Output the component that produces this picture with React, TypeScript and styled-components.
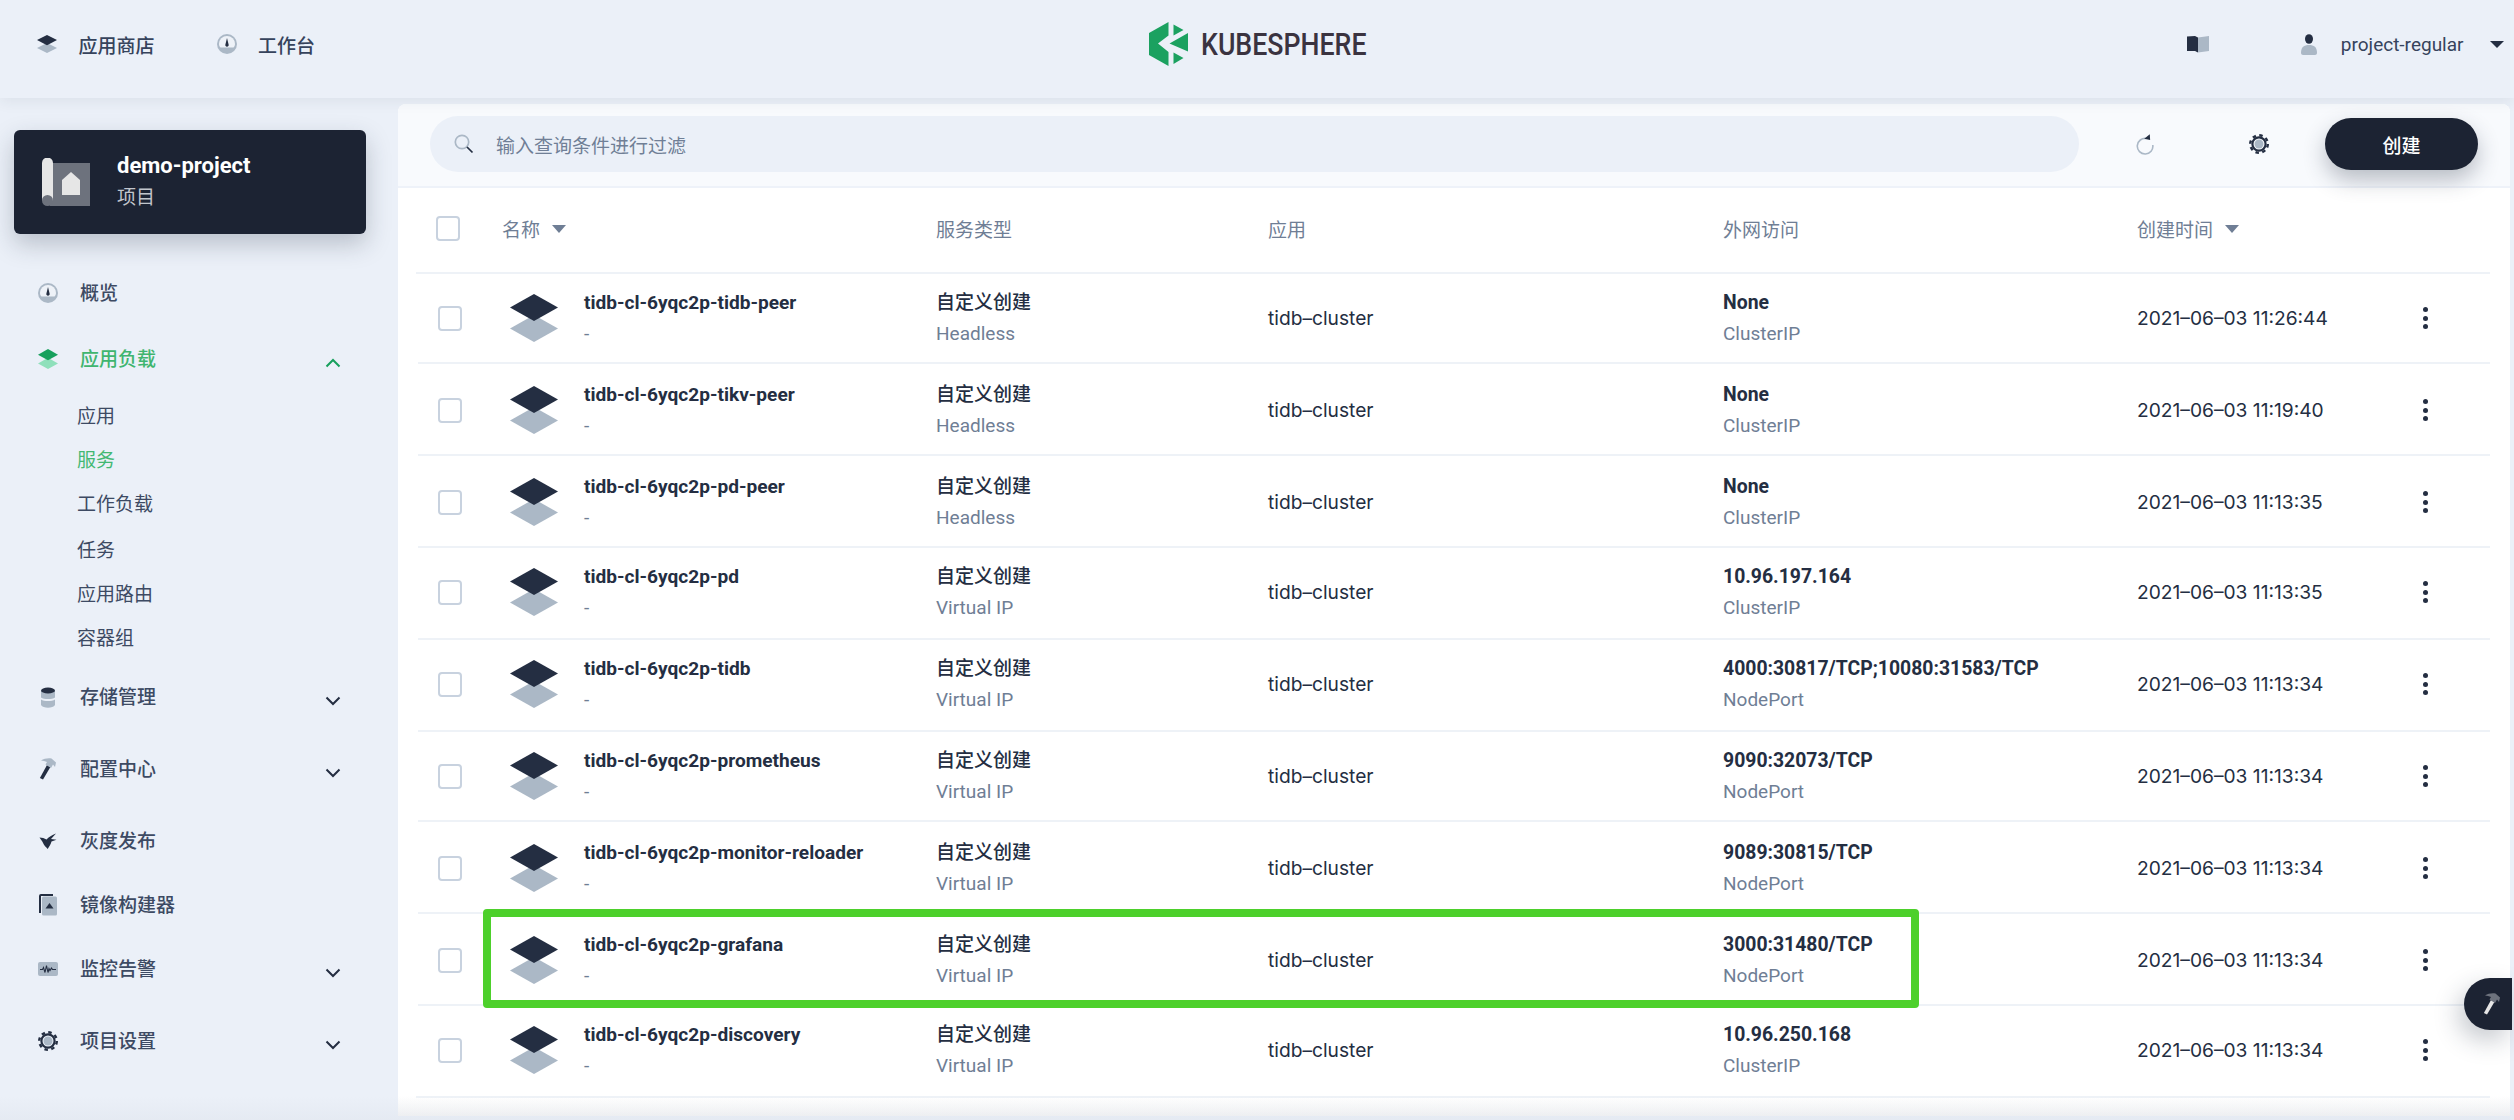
import React from "react";
import styled, { createGlobalStyle } from "styled-components";

const CJK = '"Noto Sans CJK SC"';
const Global = createGlobalStyle`
  html, body { margin: 0; padding: 0; background: #ebf0f8; }
  body { font-family: Roboto, ${CJK}, sans-serif; color: #242e42; }
  * { box-sizing: border-box; }
`;

const Page = styled.div`
  width: 2514px; height: 1120px; overflow: hidden; position: relative;
  display: flex; flex-direction: column; background: #ebf0f8;
  &::after {
    content: ""; position: absolute; left: 0; right: 0; bottom: 0; height: 24px;
    background: linear-gradient(to bottom, rgba(60,70,90,0), rgba(60,70,90,.035));
    pointer-events: none;
  }
`;
const Header = styled.header`
  flex: none; height: 98px; display: grid; grid-template-columns: 1fr auto 1fr; align-items: center;
  background: #ebf0f8; position: relative; z-index: 2; box-shadow: 0 3px 14px rgba(36,46,66,.08);
  padding: 0 10px 10px 10px;
`;
const HeadLeft = styled.div`display: flex; align-items: center; gap: 62px; margin-left: 27px;`;
const HeadLink = styled.div`display: flex; align-items: center; gap: 21.500px; font-size: 19px; font-weight: 500; color: #36435c;`;
const Logo = styled.div`display: flex; align-items: center; gap: 12px; height: 46px;`;
const LogoText = styled.span`
  display: block; width: 164px; font-size: 32px; line-height: 46px; font-weight: 500; color: #3a3340;
  transform: scaleX(.835); transform-origin: left center; white-space: nowrap;
`;
const HeadRight = styled.div`display: flex; align-items: center; justify-content: flex-end;`;
const UserName = styled.span`font-size: 19px; color: #36435c; margin: 0 26.500px 0 23.500px;`;
const UserIconWrap = styled.span`display: flex; margin-left: 92px;`;
const Body = styled.div`flex: 1; display: flex; min-height: 0;`;
const Sidebar = styled.aside`flex: none; width: 398px; padding: 32px 0 0 14px;`;
const ProjectCard = styled.div`
  width: 352px; height: 104px; border-radius: 6px; background: #1c2333;
  box-shadow: 0 10px 24px rgba(36,46,66,.25); display: flex; align-items: center; gap: 27px; padding-left: 28px;
`;
const ProjectTitle = styled.div`font-size: 22px; line-height: 31px; font-weight: 700; color: #fff;`;
const ProjectSub = styled.div`font-size: 19px; line-height: 33px; color: #c1c5cc;`;
const Nav = styled.nav`margin-top: 37px; width: 352px;`;
const NavRow = styled.div<{ $gap: number }>`
  height: 44px; margin-top: ${p => p.$gap}px; display: flex; align-items: center; position: relative; padding-left: 24px;
`;
const NavIcon = styled.span`flex: none; width: 20px; height: 24px; display: flex; align-items: center; justify-content: center;`;
const NavLabel = styled.span<{ $active?: boolean }>`
  margin-left: 22px; padding-bottom: 3px; font-size: 19px; font-weight: 500; color: ${p => (p.$active ? "#3fb56f" : "#3d4a63")}; flex: 1;
`;
const Chevron = styled.svg`flex: none; width: 16px; height: 10px; margin: 8px 25.500px 0 0;`;
const SubItem = styled.div<{ $active?: boolean; $gap: number }>`
  height: 44px; line-height: 44px; margin-top: ${p => p.$gap}px; padding: 2px 0 0 63px; font-size: 19px;
  color: ${p => (p.$active ? "#43b873" : "#3d4a63")};
`;
const Main = styled.main`flex: 1; padding: 6px 4px 4px 0; min-width: 0;`;
const Panel = styled.section`
  height: 100%; background: linear-gradient(to bottom, #fff 0, #fff 992px, #f3f4f6 100%); border-radius: 8px 8px 0 0;
`;
const Toolbar = styled.div`
  height: 84px; display: flex; align-items: center; background: #f8fafd; border-bottom: 2px solid #eef2f9;
  padding: 0 32px 2px; border-radius: 8px 8px 0 0;
`;
const Search = styled.div`
  flex: none; width: 1649px; height: 56px; border-radius: 28px; background: #ebf0f8;
  display: flex; align-items: center; padding-left: 24px; gap: 22px; font-size: 19px; color: #707f96;
`;
const RefreshBtn = styled.span`display: flex; margin-left: 57px;`;
const GearBtn = styled.span`display: flex; margin-left: 95px;`;
const CreateBtn = styled.button`
  margin-left: 56px; width: 154px; height: 52px; border: 0; border-radius: 26px; background: #1c2333; color: #fff;
  font: 500 19px Roboto, ${CJK}, sans-serif; box-shadow: 0 10px 22px rgba(36,46,66,.3);
`;
const Table = styled.div`margin: 0 20px 0 18px;`;
const Head = styled.div`
  height: 86px; display: grid; align-items: center; border-bottom: 2px solid #eef2f7;
  grid-template-columns: 66px 434px 332px 455px 414px 1fr; padding: 0 0 3px 20px;
  font-size: 19px; color: #6f7e95;
`;
const HeadCell = styled.div`display: flex; align-items: center; gap: 12px;`;
const Box = styled.span`
  display: block; width: 24px; height: 25px; border: 2.500px solid #c8d2df; border-radius: 4px; background: #fff;
`;
const Row = styled.div<{ $h: number; $nudge: number; $last?: boolean }>`
  height: ${p => p.$h}px; display: grid; align-items: center; border-bottom: 2px solid #eef2f7;
  grid-template-columns: 72px 74px 352px 332px 455px 414px 270px 36px;
  margin-left: ${p => (p.$last ? 0 : 2)}px; padding-left: ${p => (p.$last ? 22 : 20)}px;
  padding-top: ${p => (p.$nudge > 0 ? 2 : 0)}px; padding-bottom: ${p => (p.$nudge < 0 ? 2 : 0)}px;
`;
const Stack = styled.div`line-height: 31px; white-space: nowrap;`;
const Name = styled.div`font-size: 19.100px; font-weight: 700; color: #242e42;`;
const Strong = styled.div`font-size: 19.400px; font-weight: 700; color: #242e42;`;
const TypeName = styled.div`font-size: 19px; font-weight: 500; color: #242e42;`;
const Sub = styled.div`font-size: 19px; color: #6f7e95;`;
const Plain = styled.div`font-family: Inter, ${CJK}, sans-serif; font-size: 19.200px; color: #242e42; white-space: nowrap;`;
const Kebab = styled.div`display: flex; flex-direction: column; align-items: center; gap: 3.500px;`;
const Dot = styled.i`display: block; width: 5px; height: 5px; border-radius: 50%; background: #242e42;`;
const Highlight = styled.div`
  position: absolute; left: 483px; top: 909px; width: 1436px; height: 99px; border: 8px solid #4dd02b; border-radius: 4px; pointer-events: none;
`;
const FloatBtn = styled.div`
  position: absolute; left: 2464px; top: 978px; width: 48px; height: 52px; border-radius: 26px 0 0 26px; background: #1c2333;
  box-shadow: -6px 10px 24px rgba(36,46,66,.25); display: flex; align-items: center; justify-content: center; padding-left: 8px;
`;
const HammerSvg = styled.svg`display: block;`;

const DARK = "#242e42";
const GREY = "#abb8c6";

const Layers = ({ a = DARK, b = GREY, w = 20, h = 20 }: { a?: string; b?: string; w?: number; h?: number }) => (
  <svg width={w} height={h} viewBox="0 0 48 48" preserveAspectRatio="none">
    <path d="M0 34.500L24 21 48 34.500 24 48z" fill={b} />
    <path d="M0 13.500L24 0 48 13.500 24 27z" fill={a} />
  </svg>
);
const Gauge = () => (
  <svg width="20" height="20" viewBox="0 0 20 20">
    <circle cx="10" cy="10" r="10" fill={GREY} />
    <path d="M2 10a8 8 0 0 1 16 0c0 2-1 3-1.500 3.500h-13C2.900 13 2 12 2 10z" fill="#eef2f8" />
    <path d="M10 4l1.600 6.500a1.700 1.700 0 1 1-3.200 0z" fill={DARK} />
  </svg>
);
const Storage = () => (
  <svg width="16" height="21" viewBox="0 0 16 21">
    <path d="M1 4h14v6.500c-3 2-11 2-14 0z" fill={GREY} />
    <path d="M1 12.500c3 2 11 2 14 0V18c-2 3.500-12 3.500-14 0z" fill={GREY} />
    <ellipse cx="8" cy="3.500" rx="7" ry="3" fill={DARK} />
  </svg>
);
const Hammer = ({ handle = DARK, head = GREY }: { handle?: string; head?: string }) => (
  <HammerSvg width="18" height="22" viewBox="0 0 18 22">
    <path d="M8 7l3.400 2L4 21.500.9 20z" fill={handle} />
    <path d="M2 2.500C5 .5 9 0 12.500.5L17 4.500 16 9l-2-2.500-2 3.500L6.500 6.500 8 4C6 3 4 3 2 2.500z" fill={head} />
  </HammerSvg>
);
const Bird = () => (
  <svg width="18" height="17" viewBox="0 0 18 17">
    <path d="M17 .5L12 6l5.500.8-5 1.700c-.6 3-2.500 5-3.800 7.500C7 14 5 12.500 3.800 9.500 3 8 2 6.500.5 4.500 3 4.700 5.500 5.300 7.500 6.500 9.500 4 13 2 17 .5z" fill={DARK} />
  </svg>
);
const Builder = () => (
  <svg width="18" height="22" viewBox="0 0 18 22">
    <path d="M14 1H2a1 1 0 0 0-1 1v17" fill="none" stroke={DARK} strokeWidth="2" />
    <rect x="3" y="2.500" width="15" height="19" rx="1.500" fill={GREY} />
    <path d="M10.500 9l4 5.500h-8z" fill={DARK} />
  </svg>
);
const Monitor = () => (
  <svg width="20" height="14" viewBox="0 0 20 14">
    <rect width="20" height="14" rx="2" fill={GREY} />
    <path d="M2 7.500h2.500l1-2 1.500 5 1.500-7 1.500 7 1-4 1 2 1.500-2.500 1 1.500H18" fill="none" stroke={DARK} strokeWidth="1.100" />
  </svg>
);
const Gear = ({ size = 20 }: { size?: number }) => (
  <svg width={size} height={size} viewBox="0 0 20 20">
    <circle cx="10" cy="10" r="8.800" fill="none" stroke={DARK} strokeWidth="2.400" strokeDasharray="3.500 3.410" />
    <circle cx="10" cy="10" r="6.600" fill="none" stroke={DARK} strokeWidth="2.200" />
    <circle cx="10" cy="10" r="4.500" fill={GREY} />
  </svg>
);
const Book = () => (
  <svg width="22" height="18" viewBox="0 0 22 18">
    <path d="M11 2.500L22 1v15l-11 1.500z" fill={GREY} />
    <path d="M0 1.500L8 1l3 1.500v15l-3-1.500H0z" fill={DARK} />
  </svg>
);
const User = () => (
  <svg width="16" height="21" viewBox="0 0 16 21">
    <path d="M0 19c0-6 3-8 8-8s8 2 8 8c0 1-1 2-2 2H2c-1 0-2-1-2-2z" fill={GREY} />
    <ellipse cx="8" cy="5" rx="4" ry="4.800" fill={DARK} />
  </svg>
);
const Caret = ({ w = 14, h = 7, c = DARK }: { w?: number; h?: number; c?: string }) => (
  <svg width={w} height={h} viewBox="0 0 14 7" preserveAspectRatio="none"><path d="M0 0h14L7 7z" fill={c} /></svg>
);
const Refresh = () => (
  <svg width="18" height="21" viewBox="0 0 18 21">
    <path d="M10.500 4.500A7.800 7.800 0 1 0 16.800 11" fill="none" stroke={GREY} strokeWidth="1.600" />
    <path d="M13 0l1.500 5.500H8.500z" fill={DARK} transform="rotate(12 12 4)" />
  </svg>
);
const SearchIcon = () => (
  <svg width="20" height="20" viewBox="0 0 20 20">
    <circle cx="8" cy="8" r="6.700" fill="none" stroke={GREY} strokeWidth="1.700" />
    <path d="M13 13l5.500 5.500" stroke={DARK} strokeWidth="1.700" />
  </svg>
);
const ProjectIcon = () => (
  <svg width="48" height="48" viewBox="0 0 48 48">
    <rect x="8" y="5" width="40" height="43" fill="#6d727d" />
    <path d="M0 5a5.500 5.500 0 0 1 11 0v38H0z" fill="#e6e6e6" />
    <circle cx="5.500" cy="42.500" r="5.500" fill="#6d727d" />
    <path d="M20 37V22l9-8 9 8v15z" fill="#e6e6e6" />
  </svg>
);
const KsLogo = () => (
  <svg width="40" height="46" viewBox="0 0 40 46">
    <path d="M0 12L19.500 1v13.500L9 22.500l10.500 8.500v14L0 34z" fill="#1ba160" />
    <path d="M24.500 3.500L34.500 9l-10 5.500zM39 12v18.500L20.500 22.500zM24.500 31.500l10 5.500-10 6z" fill="#1ba160" />
  </svg>
);
const ChevUp = () => <Chevron viewBox="0 0 16 10"><path d="M1.500 8.500L8 2l6.500 6.500" fill="none" stroke="#17a05d" strokeWidth="2" /></Chevron>;
const ChevDown = () => <Chevron viewBox="0 0 16 10"><path d="M1.500 1.500L8 8l6.500-6.500" fill="none" stroke={DARK} strokeWidth="2" /></Chevron>;

const rows = [
  { n: "tidb-cl-6yqc2p-tidb-peer", t: "Headless", a: "None", k: "ClusterIP", d: "2021–06–03 11:26:44", h: 90, u: 0 },
  { n: "tidb-cl-6yqc2p-tikv-peer", t: "Headless", a: "None", k: "ClusterIP", d: "2021–06–03 11:19:40", h: 92, u: 1 },
  { n: "tidb-cl-6yqc2p-pd-peer", t: "Headless", a: "None", k: "ClusterIP", d: "2021–06–03 11:13:35", h: 92, u: 1 },
  { n: "tidb-cl-6yqc2p-pd", t: "Virtual IP", a: "10.96.197.164", k: "ClusterIP", d: "2021–06–03 11:13:35", h: 92, u: -1 },
  { n: "tidb-cl-6yqc2p-tidb", t: "Virtual IP", a: "4000:30817/TCP;10080:31583/TCP", k: "NodePort", d: "2021–06–03 11:13:34", h: 92, u: -1 },
  { n: "tidb-cl-6yqc2p-prometheus", t: "Virtual IP", a: "9090:32073/TCP", k: "NodePort", d: "2021–06–03 11:13:34", h: 90, u: 0 },
  { n: "tidb-cl-6yqc2p-monitor-reloader", t: "Virtual IP", a: "9089:30815/TCP", k: "NodePort", d: "2021–06–03 11:13:34", h: 92, u: 1 },
  { n: "tidb-cl-6yqc2p-grafana", t: "Virtual IP", a: "3000:31480/TCP", k: "NodePort", d: "2021–06–03 11:13:34", h: 92, u: 1 },
  { n: "tidb-cl-6yqc2p-discovery", t: "Virtual IP", a: "10.96.250.168", k: "ClusterIP", d: "2021–06–03 11:13:34", h: 92, u: -1 },
];

const subs = [
  { label: "应用", gap: 12 },
  { label: "服务", gap: 0, active: true },
  { label: "工作负载", gap: 0 },
  { label: "任务", gap: 2 },
  { label: "应用路由", gap: 0 },
  { label: "容器组", gap: 0 },
];

export default function App() {
  return (
    <Page>
      <Global />
      <Header>
        <HeadLeft>
          <HeadLink><Layers h={18} />应用商店</HeadLink>
          <HeadLink><Gauge />工作台</HeadLink>
        </HeadLeft>
        <Logo><KsLogo /><LogoText>KUBESPHERE</LogoText></Logo>
        <HeadRight>
          <Book />
          <UserIconWrap><User /></UserIconWrap>
          <UserName>project-regular</UserName>
          <Caret />
        </HeadRight>
      </Header>
      <Body>
        <Sidebar>
          <ProjectCard>
            <ProjectIcon />
            <div>
              <ProjectTitle>demo-project</ProjectTitle>
              <ProjectSub>项目</ProjectSub>
            </div>
          </ProjectCard>
          <Nav>
            <NavRow $gap={0}><NavIcon><Gauge /></NavIcon><NavLabel>概览</NavLabel></NavRow>
            <NavRow $gap={22}><NavIcon><Layers a="#17a05d" b="#8fe0bb" /></NavIcon><NavLabel $active>应用负载</NavLabel><ChevUp /></NavRow>
            {subs.map(s => <SubItem key={s.label} $gap={s.gap} $active={s.active}>{s.label}</SubItem>)}
            <NavRow $gap={16}><NavIcon><Storage /></NavIcon><NavLabel>存储管理</NavLabel><ChevDown /></NavRow>
            <NavRow $gap={28}><NavIcon><Hammer /></NavIcon><NavLabel>配置中心</NavLabel><ChevDown /></NavRow>
            <NavRow $gap={28}><NavIcon><Bird /></NavIcon><NavLabel>灰度发布</NavLabel></NavRow>
            <NavRow $gap={20}><NavIcon><Builder /></NavIcon><NavLabel>镜像构建器</NavLabel></NavRow>
            <NavRow $gap={20}><NavIcon><Monitor /></NavIcon><NavLabel>监控告警</NavLabel><ChevDown /></NavRow>
            <NavRow $gap={28}><NavIcon><Gear /></NavIcon><NavLabel>项目设置</NavLabel><ChevDown /></NavRow>
          </Nav>
        </Sidebar>
        <Main>
          <Panel>
            <Toolbar>
              <Search><SearchIcon />输入查询条件进行过滤</Search>
              <RefreshBtn><Refresh /></RefreshBtn>
              <GearBtn><Gear /></GearBtn>
              <CreateBtn>创建</CreateBtn>
            </Toolbar>
            <Table>
              <Head>
                <Box />
                <HeadCell>名称<Caret h={8} c="#6f7e95" /></HeadCell>
                <HeadCell>服务类型</HeadCell>
                <HeadCell>应用</HeadCell>
                <HeadCell>外网访问</HeadCell>
                <HeadCell>创建时间<Caret h={8} c="#6f7e95" /></HeadCell>
              </Head>
              {rows.map((r, i) => (
                <Row key={r.n} $h={r.h} $nudge={r.u} $last={i === rows.length - 1}>
                  <Box />
                  <Layers w={48} h={48} />
                  <Stack><Name>{r.n}</Name><Sub>-</Sub></Stack>
                  <Stack><TypeName>自定义创建</TypeName><Sub>{r.t}</Sub></Stack>
                  <Plain>tidb–cluster</Plain>
                  <Stack><Strong>{r.a}</Strong><Sub>{r.k}</Sub></Stack>
                  <Plain>{r.d}</Plain>
                  <Kebab><Dot /><Dot /><Dot /></Kebab>
                </Row>
              ))}
            </Table>
          </Panel>
        </Main>
      </Body>
      <Highlight />
      <FloatBtn><Hammer handle="#e6e6e6" head="#6d727d" /></FloatBtn>
    </Page>
  );
}
